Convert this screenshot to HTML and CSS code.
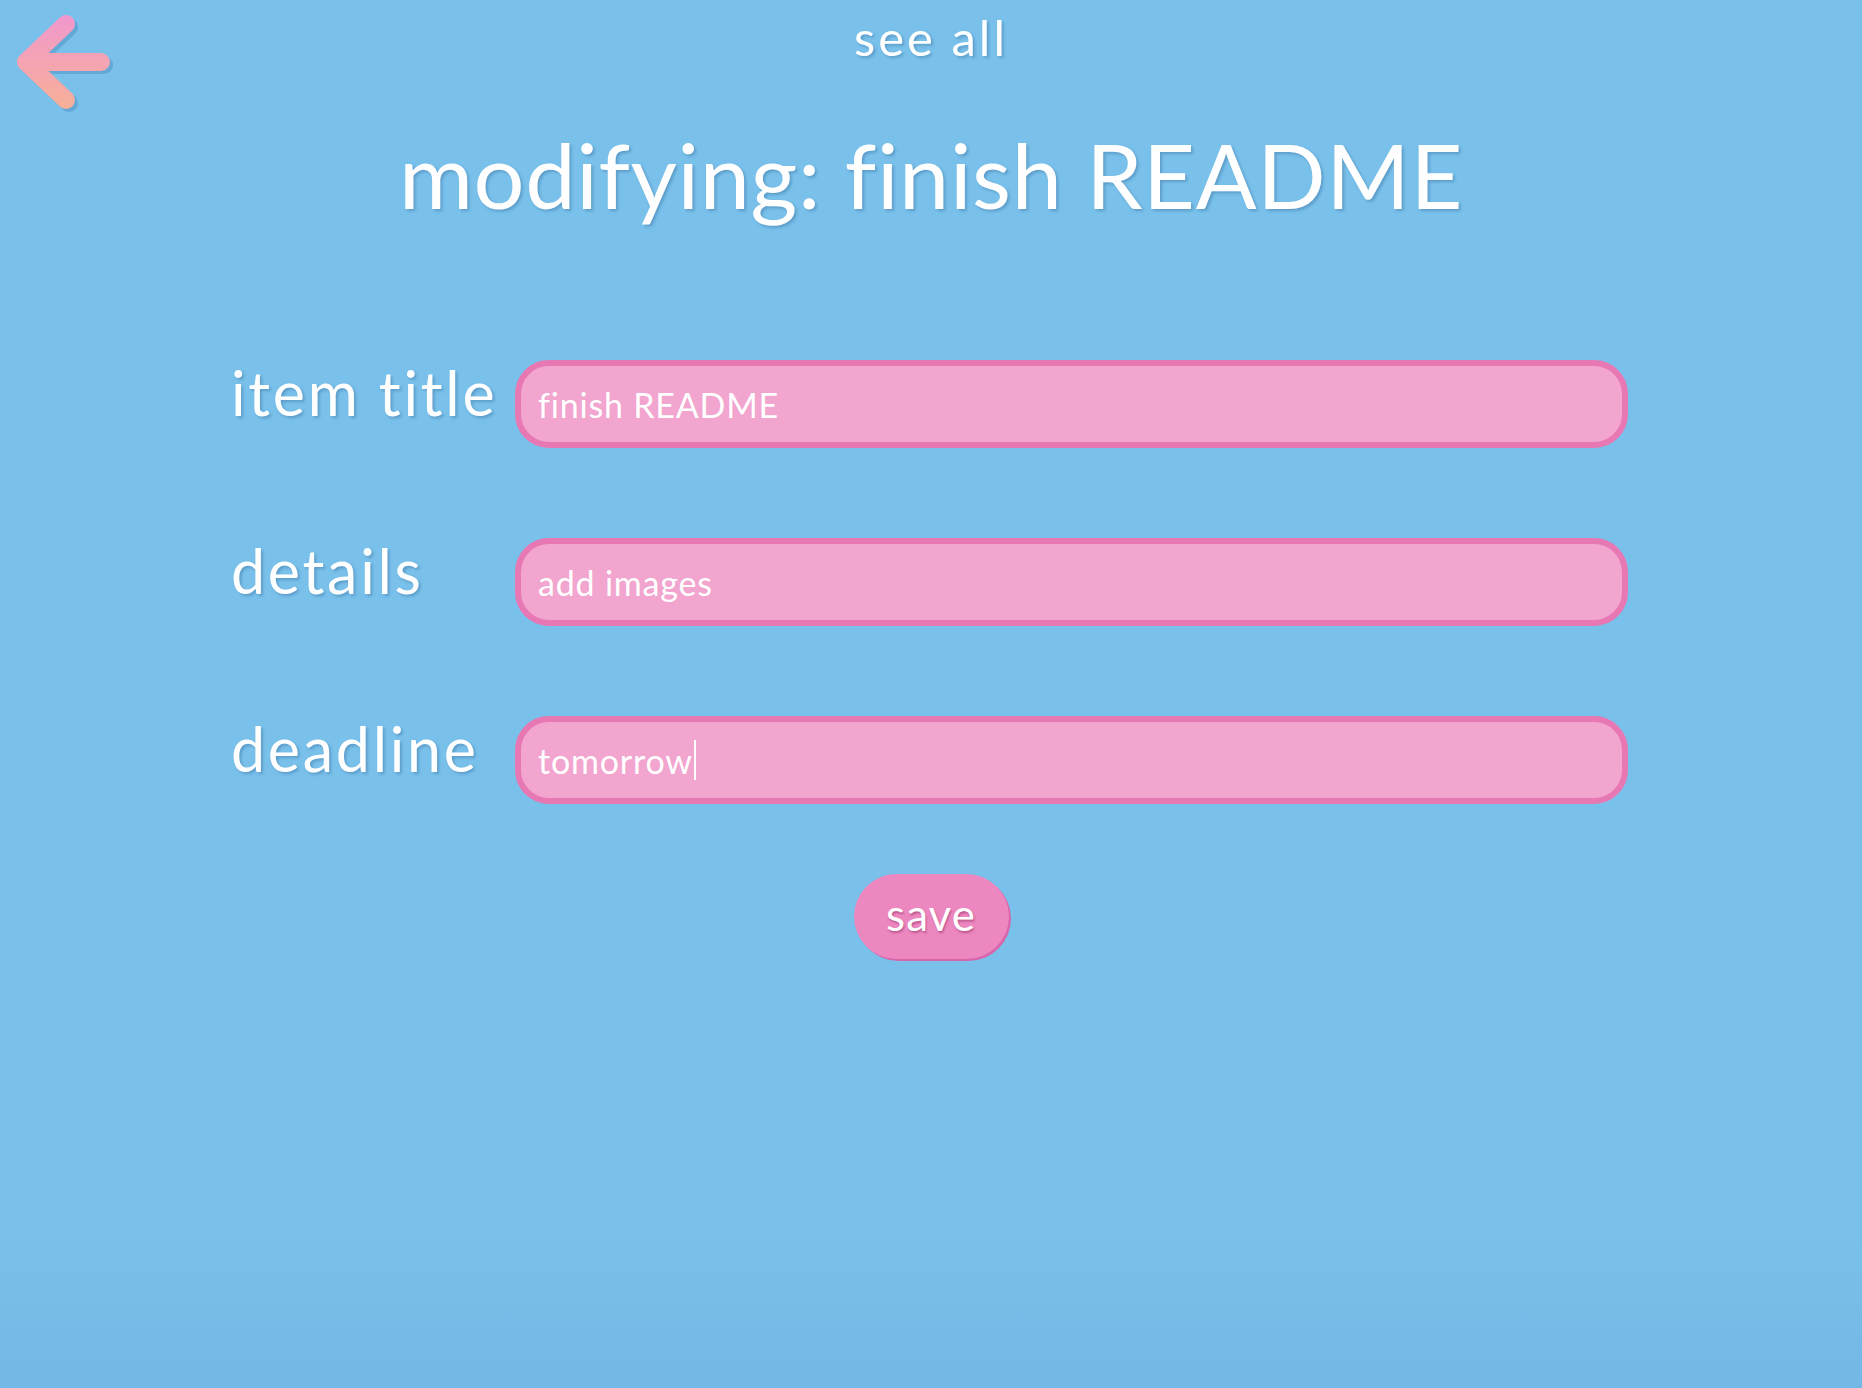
FILE: index.html
```html
<!DOCTYPE html>
<html lang="en">
<head>
<meta charset="utf-8">
<title>modifying: finish README</title>
<link rel="stylesheet" href="styles.css">
</head>
<body>
<div class="page">
  <header class="topbar">
    <a class="back" href="#" aria-label="back">
      <svg width="120" height="120" viewBox="0 0 120 120">
        <defs>
          <linearGradient id="ag" gradientUnits="userSpaceOnUse" x1="0" y1="18" x2="0" y2="108">
            <stop offset="0" stop-color="#f199cc"/>
            <stop offset="1" stop-color="#f7b098"/>
          </linearGradient>
        </defs>
        <g fill="none" stroke="#62a9d8" stroke-width="18" stroke-linecap="round" stroke-linejoin="round" transform="translate(3,3)">
          <polyline points="66,24 26,62 66,100"/>
          <line x1="26" y1="62" x2="101" y2="62"/>
        </g>
        <g fill="none" stroke="url(#ag)" stroke-width="18" stroke-linecap="round" stroke-linejoin="round">
          <polyline points="66,24 26,62 66,100"/>
          <line x1="26" y1="62" x2="101" y2="62"/>
        </g>
      </svg>
    </a>
    <a class="see-all" href="#">see all</a>
    <span></span>
  </header>

  <h1 class="title">modifying: finish README</h1>

  <form class="form">
    <label class="label" for="t">item title</label>
    <input class="field" id="t" type="text" value="finish README">
    <label class="label" for="d">details</label>
    <input class="field" id="d" type="text" value="add images">
    <label class="label" for="l">deadline</label>
    <div class="field fake" id="l"><span>tomorrow</span><span class="caret"></span></div>
  </form>

  <div class="actions">
    <button class="save" type="button">save</button>
  </div>
</div>
</body>
</html>
```

FILE: styles.css
```css
html, body {
  margin: 0;
  padding: 0;
}
body {
  background: linear-gradient(to bottom, #79c1eb 0%, #79c1eb 88%, #74b8e5 100%);
  min-height: 1388px;
  font-family: "Lato", "Open Sans", sans-serif;
  font-variant-ligatures: none;
  color: #ffffff;
}
.page {
  display: flex;
  flex-direction: column;
  align-items: center;
}
.topbar {
  width: 100%;
  display: grid;
  grid-template-columns: 1fr auto 1fr;
  align-items: start;
}
.back {
  display: block;
  width: 120px;
  height: 120px;
}
.back svg { display: block; }
.see-all {
  color: #fff;
  text-decoration: none;
  font-size: 49px;
  letter-spacing: 3px;
  line-height: 1;
  margin-top: 13px;
  text-shadow: 2px 2px 3px rgba(40, 90, 140, 0.35);
}
.title {
  margin: 9px 0 0 0;
  font-weight: 400;
  font-size: 90px;
  letter-spacing: 0.6px;
  line-height: 1;
  text-shadow: 2px 2px 3px rgba(40, 90, 140, 0.35);
}
.form {
  margin-top: 141px;
  margin-right: 3px;
  width: 1397px;
  display: grid;
  grid-template-columns: 284px 1fr;
  row-gap: 90px;
  align-items: center;
}
.label {
  font-size: 61px;
  letter-spacing: 2.7px;
  line-height: 1;
  padding-bottom: 24px;
  text-shadow: 2px 2px 3px rgba(40, 90, 140, 0.35);
}
.field {
  box-sizing: border-box;
  height: 88px;
  width: 100%;
  border: 6px solid #e878b3;
  border-radius: 34px;
  background: #f1a5cf;
  color: #fff;
  font-family: inherit;
  font-variant-ligatures: none;
  font-size: 34px;
  letter-spacing: 0.8px;
  padding: 0 0 0 17px;
  outline: none;
}
.fake {
  display: flex;
  align-items: center;
}
.caret {
  display: inline-block;
  width: 2px;
  height: 40px;
  background: #fff;
  margin-left: 1px;
}
.actions {
  margin-top: 70px;
  display: flex;
  justify-content: center;
}
.save {
  width: 155px;
  height: 85px;
  border: none;
  border-radius: 43px;
  background: #ec88bf;
  box-shadow: 2px 2px 0 #d965ab;
  color: #fff;
  font-family: inherit;
  font-size: 44px;
  letter-spacing: 1px;
  padding: 0 0 6px 0;
  text-shadow: 1px 2px 2px rgba(150, 40, 100, 0.5);
  cursor: pointer;
}
```
